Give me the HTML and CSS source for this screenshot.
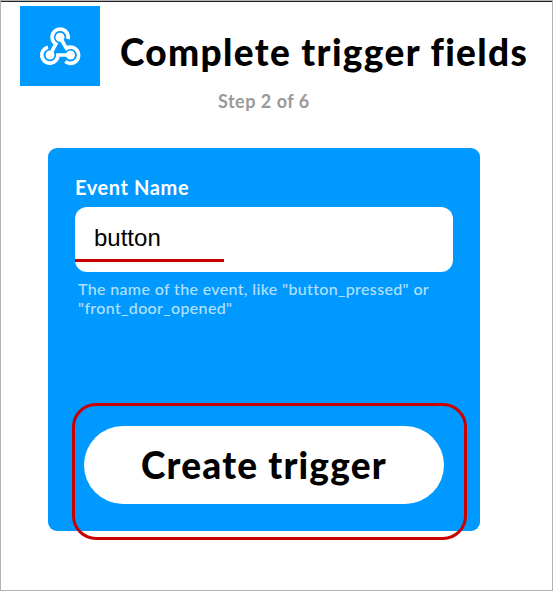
FILE: index.html
```html
<!DOCTYPE html>
<html lang="en">
<head>
<meta charset="utf-8">
<title>Complete trigger fields</title>
<link rel="stylesheet" href="styles.css">
</head>
<body>
<main class="page">
  <header class="header">
    <div class="service">
      <svg class="icon" viewBox="0 0 80 80" fill="none" stroke="#fff" stroke-width="3.7">
        <path d="M48 33A8.1 8.1 0 1 0 35.8 38L30 49"/>
        <path d="M28 41.2A8.1 8.1 0 1 0 38 49L50.5 49"/>
        <path d="M45.3 55.4A8.1 8.1 0 1 0 46.4 42.3L40 31"/>
        <g fill="#fff" stroke="none"><circle cx="40" cy="31.2" r="4.5"/><circle cx="30" cy="49" r="4.5"/><circle cx="50.5" cy="49" r="4.5"/></g>
      </svg>
    </div>
    <h1 class="title">Complete trigger fields</h1>
  </header>
  <p class="step">Step 2 of 6</p>
  <form class="card">
    <label class="label" for="event">Event Name</label>
    <div class="field">
      <input class="input" id="event" type="text" value="button">
      <span class="underline"></span>
    </div>
    <p class="hint">The name of the event, like "button_pressed" or<br>"front_door_opened"</p>
    <div class="action">
      <button class="button" type="button">Create trigger</button>
      <span class="highlight"></span>
    </div>
  </form>
</main>
</body>
</html>
```
FILE: styles.css
```css
* { box-sizing: border-box; }
body { margin: 0; }
.page {
  height: 591px;
  border: 1px solid #b3b3b3;
  background: linear-gradient(#222 0 1px, #fff 1px);
  font-family: Lato, sans-serif;
  overflow: hidden;
}
.header { display: flex; padding: 5px 0 0 19px; }
.service { width: 80px; height: 80px; background: #09f; }
.icon { display: block; width: 80px; height: 80px; }
.title {
  margin: 21px 0 0 20px;
  font-size: 37px;
  line-height: 50px;
  font-weight: 900;
  letter-spacing: 1.35px;
  white-space: nowrap;
}
.step {
  margin: 3px 0 0 217px;
  font-size: 18px;
  line-height: 24px;
  font-weight: 700;
  letter-spacing: 0.5px;
  color: #999;
  white-space: nowrap;
}
.card {
  width: 432px;
  height: 383px;
  margin: 35px 0 0 47px;
  padding: 26px 27px 0;
  border-radius: 9px;
  background: #09f;
}
.label {
  display: block;
  height: 33px;
  font-size: 20px;
  line-height: 26px;
  font-weight: 700;
  letter-spacing: 0.6px;
  color: #fff;
}
.field { position: relative; height: 65px; }
.input {
  display: block;
  width: 378px;
  height: 65px;
  padding: 0 19px 4px;
  border: 0;
  border-radius: 12px;
  background: #fff;
  font: 24px "Liberation Sans", sans-serif;
  color: #000;
}
.underline {
  position: absolute;
  left: 0;
  top: 52px;
  width: 149px;
  height: 3px;
  background: #c00;
}
.hint {
  height: 38px;
  margin: 7px 0 0 3px;
  font-size: 16px;
  line-height: 19px;
  font-weight: 500;
  letter-spacing: 0.35px;
  color: #b3e0ff;
  white-space: nowrap;
}
.action { position: relative; width: 360px; margin: 109px 0 0 9px; }
.button {
  display: block;
  width: 360px;
  height: 78px;
  padding: 0 0 2px;
  border: 0;
  border-radius: 39px;
  background: #fff;
  font: 900 37px Lato, sans-serif;
  letter-spacing: 1.2px;
  color: #000;
}
.highlight {
  position: absolute;
  left: -12px;
  top: -23px;
  width: 395px;
  height: 137px;
  border: 3px solid #c00;
  border-radius: 24px;
}
```
